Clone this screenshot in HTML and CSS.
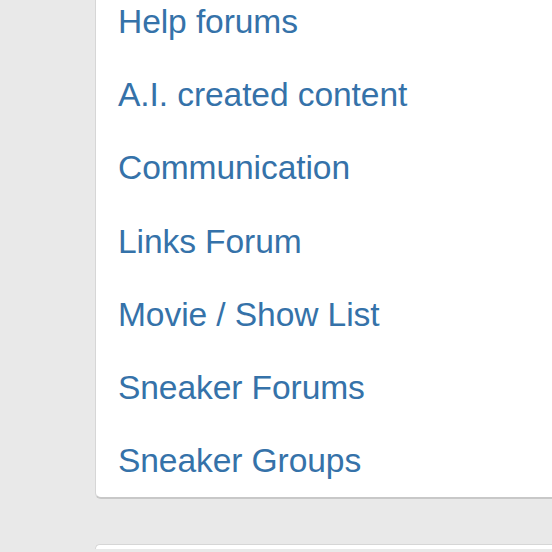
FILE: index.html
```html
<!DOCTYPE html>
<html>
<head>
<meta charset="utf-8">
<link rel="stylesheet" href="styles.css">
</head>
<body>
<div class="page">
  <div class="panel">
    <ul class="forum-list">
      <li><a href="#">Help forums</a></li>
      <li><a href="#">A.I. created content</a></li>
      <li><a href="#">Communication</a></li>
      <li><a href="#">Links Forum</a></li>
      <li><a href="#">Movie / Show List</a></li>
      <li><a href="#">Sneaker Forums</a></li>
      <li><a href="#">Sneaker Groups</a></li>
    </ul>
  </div>
  <div class="panel panel-next"></div>
</div>
</body>
</html>
```
FILE: styles.css
```css
html, body {
  margin: 0;
  padding: 0;
  background: #e9e9e9;
  overflow: hidden;
}
.page {
  padding-left: 95px;
  display: flex;
  flex-direction: column;
  gap: 45px;
}
.panel {
  background: #fff;
  border: 1px solid #d6d6d6;
  border-bottom: 2px solid #c8c8c8;
  border-right: none;
  border-radius: 6px 0 0 6px;
  margin-top: -16px;
}
.panel-next {
  margin-top: 0;
  height: 4px;
  border-bottom: none;
  border-radius: 6px 0 0 0;
}
.forum-list {
  list-style: none;
  margin: 0;
  padding: 0 0 0 22px;
}
.forum-list li {
  font-family: "Liberation Sans", Arial, sans-serif;
  font-size: 33.6px;
  line-height: 73.2px;
  letter-spacing: -0.1px;
}
.forum-list a {
  color: #3572a9;
  text-decoration: none;
}
```
